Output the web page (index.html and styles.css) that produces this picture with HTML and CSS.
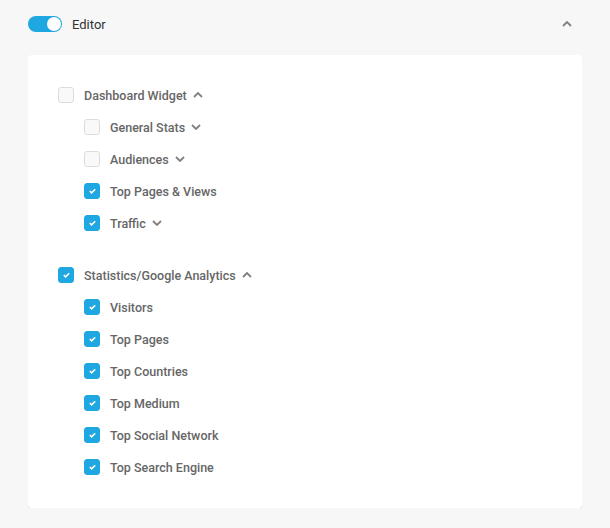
FILE: index.html
```html
<!DOCTYPE html>
<html lang="en">
<head>
  <meta charset="UTF-8" />
  <title>Editor permissions</title>
  <link rel="stylesheet" href="styles.css">
</head>
<body>

<div class="panel">
  <div class="panel-head">
    <span class="toggle on"><span class="knob"></span></span>
    <span class="role">Editor</span>
    <svg class="caret caret-head" viewBox="0 0 10 6"><path d="M1 5 L5 1 L9 5" /></svg>
  </div>

  <div class="card">
    <div class="group">
      <div class="row">
        <span class="box"></span>
        <span class="label">Dashboard Widget</span>
        <svg class="caret" viewBox="0 0 10 6"><path d="M1 5 L5 1 L9 5" /></svg>
      </div>
      <div class="children">
        <div class="row">
          <span class="box"></span>
          <span class="label">General Stats</span>
          <svg class="caret" viewBox="0 0 10 6"><path d="M1 1 L5 5 L9 1" /></svg>
        </div>
        <div class="row">
          <span class="box"></span>
          <span class="label">Audiences</span>
          <svg class="caret" viewBox="0 0 10 6"><path d="M1 1 L5 5 L9 1" /></svg>
        </div>
        <div class="row">
          <span class="box checked"><svg viewBox="0 0 10 8"><path d="M2 4 L4 6 L8 2" /></svg></span>
          <span class="label">Top Pages &amp; Views</span>
        </div>
        <div class="row">
          <span class="box checked"><svg viewBox="0 0 10 8"><path d="M2 4 L4 6 L8 2" /></svg></span>
          <span class="label">Traffic</span>
          <svg class="caret" viewBox="0 0 10 6"><path d="M1 1 L5 5 L9 1" /></svg>
        </div>
      </div>
    </div>

    <div class="group">
      <div class="row">
        <span class="box checked"><svg viewBox="0 0 10 8"><path d="M2 4 L4 6 L8 2" /></svg></span>
        <span class="label">Statistics/Google Analytics</span>
        <svg class="caret" viewBox="0 0 10 6"><path d="M1 5 L5 1 L9 5" /></svg>
      </div>
      <div class="children">
        <div class="row">
          <span class="box checked"><svg viewBox="0 0 10 8"><path d="M2 4 L4 6 L8 2" /></svg></span>
          <span class="label">Visitors</span>
        </div>
        <div class="row">
          <span class="box checked"><svg viewBox="0 0 10 8"><path d="M2 4 L4 6 L8 2" /></svg></span>
          <span class="label">Top Pages</span>
        </div>
        <div class="row">
          <span class="box checked"><svg viewBox="0 0 10 8"><path d="M2 4 L4 6 L8 2" /></svg></span>
          <span class="label">Top Countries</span>
        </div>
        <div class="row">
          <span class="box checked"><svg viewBox="0 0 10 8"><path d="M2 4 L4 6 L8 2" /></svg></span>
          <span class="label">Top Medium</span>
        </div>
        <div class="row">
          <span class="box checked"><svg viewBox="0 0 10 8"><path d="M2 4 L4 6 L8 2" /></svg></span>
          <span class="label">Top Social Network</span>
        </div>
        <div class="row">
          <span class="box checked"><svg viewBox="0 0 10 8"><path d="M2 4 L4 6 L8 2" /></svg></span>
          <span class="label">Top Search Engine</span>
        </div>
      </div>
    </div>
  </div>
</div>

</body>
</html>
```

FILE: styles.css
```css
* { box-sizing: border-box; }
body {
  margin: 0;
  background: #f7f7f7;
  font-family: Roboto, 'Liberation Sans', sans-serif;
  color: #666;
  font-size: 13px;
}
.panel {
  padding: 14px 28px 0 28px;
}
.panel-head {
  display: flex;
  align-items: center;
  height: 20px;
  margin-bottom: 21px;
}
.toggle {
  width: 34px;
  height: 16px;
  border-radius: 8px;
  background: #1ea7e1;
  display: flex;
  align-items: center;
  justify-content: flex-end;
  padding: 1px;
}
.knob {
  width: 14px;
  height: 14px;
  border-radius: 50%;
  background: #fff;
}
.role {
  margin-left: 10px;
  color: #333;
  font-size: 13px;
}
.caret {
  width: 10px;
  height: 6px;
  margin-left: 6px;
  fill: none;
  stroke: #808080;
  stroke-width: 1.8;
}
.caret-head {
  margin-left: auto;
  margin-right: 10px;
}
.card {
  background: #fff;
  border-radius: 4px;
  box-shadow: 0 2px 0 #e4e4e4;
  padding: 24px 30px 25px 30px;
}
.group + .group {
  margin-top: 20px;
}
.children {
  padding-left: 26px;
}
.row {
  display: flex;
  align-items: center;
  height: 32px;
}
.box {
  width: 16px;
  height: 16px;
  border: 1px solid #dcdcdc;
  border-radius: 3px;
  background: #f9f9f9;
  margin-right: 10px;
  display: flex;
  align-items: center;
  justify-content: center;
}
.box.checked {
  background: #1ea7e1;
  border-color: #1ea7e1;
}
.box svg {
  width: 9px;
  height: 8px;
  fill: none;
  stroke: #fff;
  stroke-width: 1.8;
}
.label {
  font-size: 12.5px;
  font-weight: 500;
}
```
